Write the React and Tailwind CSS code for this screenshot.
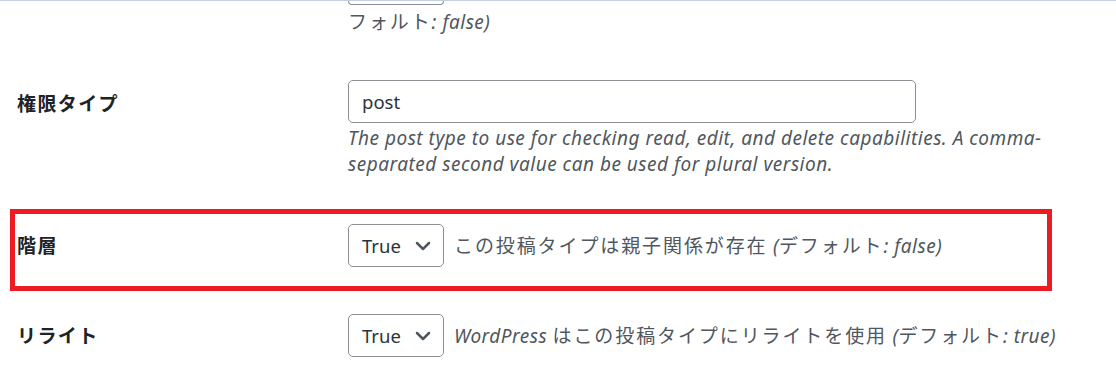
import React from "react";

const J = ({ children }) => (
  <span className="not-italic text-[19px] tracking-[1.9px] font-['Noto_Sans_CJK_JP',sans-serif]">{children}</span>
);
const I = ({ children }) => <span className="italic text-[19px] tracking-[0.5px]">{children}</span>;

function Chevron() {
  return (
    <svg width="16" height="10" viewBox="0 0 16 10" fill="none">
      <path d="M2 2l6 6 6-6" stroke="#50575e" strokeWidth="2.5" strokeLinecap="round" strokeLinejoin="round" />
    </svg>
  );
}

function Select() {
  return (
    <div className="flex h-[43px] w-[96px] shrink-0 items-center justify-between rounded-[5px] border border-[#8c8f94] bg-white pl-[13px] pr-[12px] text-[18.5px] text-[#2c3338]">
      <span>True</span>
      <Chevron />
    </div>
  );
}

function Label({ children }) {
  return (
    <span className="text-[19px] font-bold tracking-[1.4px] text-[#1d2327] font-['Noto_Sans_CJK_JP',sans-serif] leading-[24px]">
      {children}
    </span>
  );
}

export default function App() {
  return (
    <div className="h-[375px] w-[1116px] overflow-hidden bg-white font-['Noto_Sans','Noto_Sans_CJK_JP',sans-serif] text-[#50575e]">
      <div className="h-px w-full bg-[#c5d0e1]" />
      {/* partially visible previous row */}
      <div className="ml-[348px]">
        <div className="h-[4px] w-[96px] rounded-b-[5px] border-x border-b border-[#8c8f94]" />
        <p className="mt-[4px] leading-[24px]">
          <J>フォルト</J>
          <I>: false)</I>
        </p>
      </div>

      {/* 権限タイプ */}
      <div className="mt-[45px] flex">
        <div className="w-[348px] shrink-0 pl-[17px] pt-[11px]">
          <Label>権限タイプ</Label>
        </div>
        <div>
          <div className="flex h-[43px] w-[568px] items-center rounded-[5px] border border-[#8c8f94] px-[13px] text-[18.5px] text-[#2c3338]">
            post
          </div>
          <p className="mt-[2px] text-[19px] italic tracking-[0.5px] leading-[26px]">
            The post type to use for checking read, edit, and delete capabilities. A comma-
            <br />
            separated second value can be used for plural version.
          </p>
        </div>
      </div>

      {/* 階層 (highlighted) */}
      <div className="ml-[10px] mt-[32px] h-[82px] w-[1042px] border-[5px] border-[#ed1c24] pt-[10px]">
        <div className="flex h-[43px] items-center">
          <div className="w-[333px] shrink-0 pl-[2px]">
            <Label>階層</Label>
          </div>
          <Select />
          <p className="ml-[10px] leading-[24px]">
            <J>この投稿タイプは親子関係が存在</J>
            <I> (</I>
            <J>デフォルト</J>
            <I>: false)</I>
          </p>
        </div>
      </div>

      {/* リライト */}
      <div className="mt-[23px] flex h-[43px] items-center">
        <div className="w-[348px] shrink-0 pl-[17px]">
          <Label>リライト</Label>
        </div>
        <Select />
        <p className="ml-[10px] leading-[24px]">
          <I>WordPress </I>
          <J>はこの投稿タイプにリライトを使用</J>
          <I> (</I>
          <J>デフォルト</J>
          <I>: true)</I>
        </p>
      </div>
    </div>
  );
}
